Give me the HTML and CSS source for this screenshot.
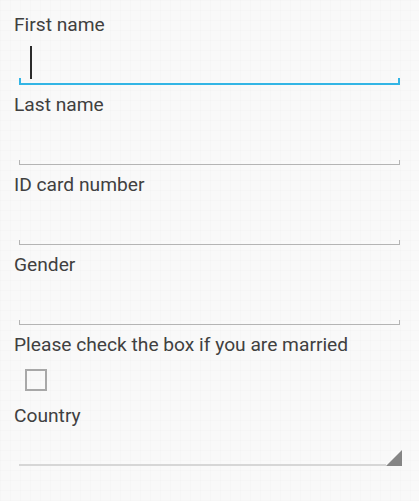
FILE: index.html
```html
<!DOCTYPE html>
<html>
<head>
<meta charset="utf-8">
<link rel="stylesheet" href="styles.css">
</head>
<body>
<form class="form">
  <div class="label">First name</div>
  <div class="field">
    <div class="input focused"><span class="caret"></span></div>
  </div>
  <div class="label">Last name</div>
  <div class="field">
    <div class="input"></div>
  </div>
  <div class="label">ID card number</div>
  <div class="field">
    <div class="input"></div>
  </div>
  <div class="label">Gender</div>
  <div class="field">
    <div class="input"></div>
  </div>
  <div class="label">Please check the box if you are married</div>
  <div class="check-row">
    <div class="checkbox"></div>
  </div>
  <div class="label">Country</div>
  <div class="spinner">
    <div class="spinner-line"></div>
    <div class="spinner-arrow"></div>
  </div>
</form>
</body>
</html>
```

FILE: styles.css
```css
html, body {
  margin: 0;
  padding: 0;
}
body {
  width: 419px;
  height: 501px;
  overflow: hidden;
  background-color: #f9f9f9;
  background-image:
    linear-gradient(to right, rgba(0,0,0,0.012) 1px, transparent 1px),
    linear-gradient(to bottom, rgba(0,0,0,0.012) 1px, transparent 1px);
  background-size: 10px 10px;
  font-family: Roboto, "Noto Sans", sans-serif;
  color: #404040;
}
.form {
  display: flex;
  flex-direction: column;
  padding: 12px 0 0 14px;
}
.label {
  font-size: 19.2px;
  line-height: 22px;
  height: 22px;
  padding-top: 2px;
  margin-bottom: -2px;
}
.field {
  height: 58px;
  display: flex;
  flex-direction: column;
}
.input {
  position: relative;
  margin-left: 5px;
  width: 381px;
  height: 45px;
  margin-top: 5px;
  border-bottom: 1px solid #b4b4b4;
}
.input::before,
.input::after {
  content: "";
  position: absolute;
  bottom: 0;
  width: 1px;
  height: 4px;
  background: #b4b4b4;
}
.input::before { left: 0; }
.input::after { right: 0; }
.input.focused {
  border-bottom: 2px solid #33b5e5;
  height: 45px;
  margin-top: 4px;
}
.input.focused::before,
.input.focused::after {
  background: #33b5e5;
  width: 2px;
  height: 5px;
}
.caret {
  position: absolute;
  left: 11px;
  top: 8px;
  width: 2px;
  height: 33px;
  background: #2b2b2b;
}
.check-row {
  height: 49px;
  display: flex;
  align-items: flex-start;
}
.checkbox {
  margin: 15px 0 0 11px;
  width: 18px;
  height: 18px;
  border: 2px solid #a8a8a8;
  background: transparent;
}
.spinner {
  position: relative;
  margin-left: 5px;
  width: 383px;
  height: 41px;
  display: flex;
  align-items: flex-end;
}
.spinner-line {
  flex: 1;
  height: 2px;
  background: #d6d6d6;
}
.spinner-arrow {
  width: 0;
  height: 0;
  border-style: solid;
  border-width: 0 0 16px 16px;
  border-color: transparent transparent #858585 transparent;
}
```
